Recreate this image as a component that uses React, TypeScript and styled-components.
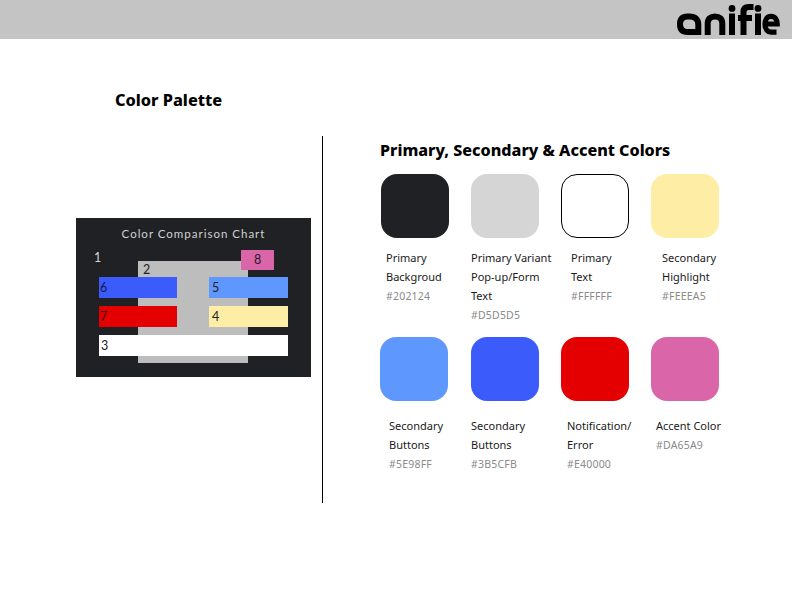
import React from "react";
import styled, { createGlobalStyle } from "styled-components";

const GlobalStyle = createGlobalStyle`
  html, body {
    margin: 0;
    padding: 0;
    background: #ffffff;
    font-family: "Noto Sans", "Open Sans", sans-serif;
  }
`;

const Page = styled.div`
  width: 792px;
  height: 612px;
  overflow: hidden;
`;

const Header = styled.header`
  height: 39px;
  background: #c4c4c4;
  display: flex;
  justify-content: flex-end;
  padding-right: 12px;
`;

const Logo = styled.svg`
  width: 104px;
  height: 39px;
  display: block;
`;

const Main = styled.main`
  display: flex;
  padding-top: 48px;
`;

const LeftColumn = styled.section`
  width: 323px;
  flex: none;
  display: flex;
  flex-direction: column;
`;

const PageTitle = styled.h1`
  margin: 0 0 0 115px;
  font-size: 16.3px;
  line-height: 26px;
  font-weight: 800;
  color: #000000;
`;

const LeftBody = styled.div`
  margin-top: 23px;
  height: 367px;
  border-right: 1px solid #000000;
  box-sizing: border-box;
  padding: 82px 0 0 76px;
`;

const Chart = styled.div`
  position: relative;
  width: 235px;
  height: 159px;
  box-sizing: border-box;
  background: #202124;
  padding-top: 59px;
  font-family: "Lato", sans-serif;
`;

const ChartTitle = styled.div`
  position: absolute;
  top: 8px;
  left: 0;
  right: 0;
  text-align: center;
  font-size: 11.5px;
  letter-spacing: 1px;
  line-height: 16px;
  color: #d0d0d0;
`;

const ChartNumber = styled.span<{ $x: number; $y: number; $color: string }>`
  position: absolute;
  left: ${(p) => p.$x}px;
  top: ${(p) => p.$y}px;
  font-size: 12.5px;
  line-height: 14px;
  color: ${(p) => p.$color};
`;

const ChartPanel = styled.div`
  position: absolute;
  left: 62px;
  top: 43px;
  width: 110px;
  height: 102px;
  background: #bdbdbd;
`;

const ChartTag = styled.div`
  position: absolute;
  left: 165px;
  top: 32px;
  width: 33px;
  height: 20px;
  background: #da65a9;
  color: #202124;
  font-size: 12.5px;
  line-height: 19px;
  text-align: center;
`;

const BarGrid = styled.div`
  position: relative;
  margin-left: 23px;
  width: 189px;
  display: grid;
  grid-template-columns: 78px 79px;
  justify-content: space-between;
  grid-auto-rows: 21px;
  row-gap: 8px;
`;

const Bar = styled.div<{ $color: string; $wide?: boolean; $text?: string; $inset?: number }>`
  background: ${(p) => p.$color};
  color: ${(p) => p.$text ?? "#202124"};
  grid-column: ${(p) => (p.$wide ? "1 / -1" : "auto")};
  font-size: 12.5px;
  line-height: 21px;
  padding-left: ${(p) => p.$inset ?? 3}px;
`;

const RightColumn = styled.section`
  padding-left: 57px;
`;

const SectionTitle = styled.h2`
  margin: 0;
  padding-top: 50px;
  font-size: 16.1px;
  line-height: 26px;
  font-weight: 800;
  color: #000000;
`;

const SwatchGrid = styled.div`
  margin: 11px 0 0 1px;
  display: grid;
  grid-template-columns: repeat(4, 90px);
  row-gap: 12px;
`;

const SwatchCell = styled.div`
  min-width: 0;
`;

const Swatch = styled.div<{ $color: string; $outlined?: boolean; $shift?: number }>`
  width: 68px;
  height: 64px;
  box-sizing: border-box;
  margin-left: ${(p) => p.$shift ?? 0}px;
  border-radius: 16px;
  background: ${(p) => p.$color};
  border: ${(p) => (p.$outlined ? "1px solid #000000" : "none")};
`;

const SwatchText = styled.div<{ $indent: number; $gap: number }>`
  margin-top: ${(p) => p.$gap}px;
  padding-left: ${(p) => p.$indent}px;
  white-space: nowrap;
  font-size: 11px;
  line-height: 19px;
`;

const SwatchLine = styled.div`
  color: #1a1a1a;
`;

const SwatchHex = styled.div`
  color: #8a8a8a;
  padding-top: 1px;
  font-size: 10.5px;
  letter-spacing: 0.2px;
`;

type SwatchData = {
  color: string;
  lines: string[];
  hex: string;
  indent: number;
  gap: number;
  shift?: number;
  outlined?: boolean;
};

const swatches: SwatchData[] = [
  { color: "#202124", lines: ["Primary", "Backgroud"], hex: "#202124", indent: 5, gap: 10 },
  { color: "#D5D5D5", lines: ["Primary Variant", "Pop-up/Form", "Text"], hex: "#D5D5D5", indent: 0, gap: 10 },
  { color: "#FFFFFF", lines: ["Primary", "Text"], hex: "#FFFFFF", indent: 10, gap: 10, outlined: true },
  { color: "#FEEEA5", lines: ["Secondary", "Highlight"], hex: "#FEEEA5", indent: 11, gap: 10 },
  { color: "#5E98FF", lines: ["Secondary", "Buttons"], hex: "#5E98FF", indent: 8, gap: 15, shift: -1 },
  { color: "#3B5CFB", lines: ["Secondary", "Buttons"], hex: "#3B5CFB", indent: 0, gap: 15 },
  { color: "#E40000", lines: ["Notification/", "Error"], hex: "#E40000", indent: 6, gap: 15 },
  { color: "#DA65A9", lines: ["Accent Color"], hex: "#DA65A9", indent: 5, gap: 15 },
];

const App: React.FC = () => {
  return (
    <Page>
      <GlobalStyle />
      <Header>
        <Logo viewBox="0 0 104 39" fill="none" stroke="#000000" strokeWidth="6" aria-label="anifie">
          <path d="M22.3 35V24.5C22.3 19 19 16.4 13.5 16.4H11.5C6.5 16.4 4 19 4 24C4 29.5 6.5 32 11.5 32H22" />
          <path d="M31.7 35V23.5C31.7 19 34.5 16.4 39 16.4C43.5 16.4 46.3 19 46.3 23.5V35" />
          <path d="M56 13.5V35" />
          <circle cx="56" cy="8.4" r="3.4" fill="#000000" stroke="none" />
          <path d="M67.5 35V12C67.5 8.5 69.5 7 72.5 7H77.5" />
          <path d="M62 18H76" />
          <path d="M82 13.5V35" />
          <circle cx="82" cy="8.4" r="3.4" fill="#000000" stroke="none" />
          <path
            d="M89 24H101.2C101.2 19.2 98.8 16.3 95 16.3C91.2 16.3 89 19.5 89 24.3C89 29.3 91.5 32.2 95.5 32.2H100.5"
            strokeWidth="5.2"
          />
        </Logo>
      </Header>
      <Main>
        <LeftColumn>
          <PageTitle>Color Palette</PageTitle>
          <LeftBody>
            <Chart>
              <ChartTitle>Color Comparison Chart</ChartTitle>
              <ChartPanel />
              <ChartTag>8</ChartTag>
              <ChartNumber $x={18} $y={33} $color="#d5d5d5">1</ChartNumber>
              <ChartNumber $x={67} $y={45} $color="#202124">2</ChartNumber>
              <BarGrid>
                <Bar $color="#3B5CFB" $text="#101a50" $inset={1}>6</Bar>
                <Bar $color="#5E98FF">5</Bar>
                <Bar $color="#E40000" $text="#3a0000" $inset={1}>7</Bar>
                <Bar $color="#FEEEA5">4</Bar>
                <Bar $color="#FFFFFF" $wide $inset={2}>3</Bar>
              </BarGrid>
            </Chart>
          </LeftBody>
        </LeftColumn>
        <RightColumn>
          <SectionTitle>Primary, Secondary &amp; Accent Colors</SectionTitle>
          <SwatchGrid>
            {swatches.map((s) => (
              <SwatchCell key={s.hex}>
                <Swatch $color={s.color} $outlined={s.outlined} $shift={s.shift} />
                <SwatchText $indent={s.indent} $gap={s.gap}>
                  {s.lines.map((line) => (
                    <SwatchLine key={line}>{line}</SwatchLine>
                  ))}
                  <SwatchHex>{s.hex}</SwatchHex>
                </SwatchText>
              </SwatchCell>
            ))}
          </SwatchGrid>
        </RightColumn>
      </Main>
    </Page>
  );
};

export default App;
